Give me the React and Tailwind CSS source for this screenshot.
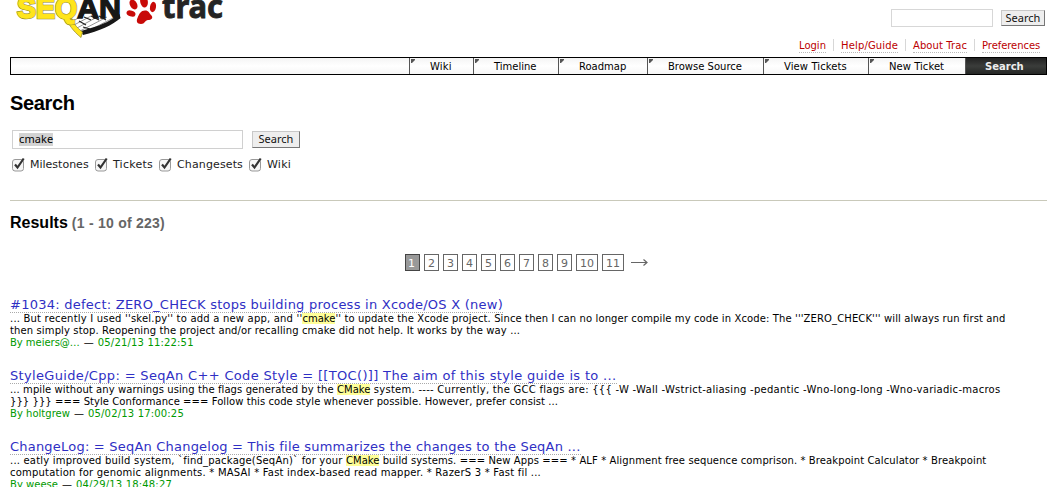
import React from 'react';

const meta = [
  { t: 'Login', c: 'w-[27px]' },
  { t: 'Help/Guide', c: 'w-[57px] tracking-[0.15px]' },
  { t: 'About Trac', c: 'w-[54px] tracking-[0.09px]' },
  { t: 'Preferences', c: 'w-[58px] tracking-[-0.06px]' },
];

const tabs = [
  { t: 'Wiki', c: 'w-[64px] pl-5 tracking-[0.2px]' },
  { t: 'Timeline', c: 'w-[85px] pl-5' },
  { t: 'Roadmap', c: 'w-[89px] pl-5' },
  { t: 'Browse Source', c: 'w-[116px] pl-5' },
  { t: 'View Tickets', c: 'w-[105px] pl-5 tracking-[0.1px]' },
  { t: 'New Ticket', c: 'w-[97px] pl-5 tracking-[0.05px]' },
];

const filters = [
  { t: 'Milestones', c: 'w-[83px]' },
  { t: 'Tickets', c: 'w-[64px] tracking-[0.24px]' },
  { t: 'Changesets', c: 'w-[90px] tracking-[0.13px]' },
  { t: 'Wiki', c: 'w-[60px] tracking-[0.22px]' },
];

const pages = ['2', '3', '4', '5', '6', '7', '8', '9', '10', '11'];

function Logo() {
  return (
    <svg className="block h-[42px] w-[230px]" viewBox="0 0 230 42">
      <path d="M74 18H110L118 17 100 26 84 33Z" fill="#fff" />
      <g fill="none" stroke="#8a8a8a" strokeWidth="0.9">
        <path d="M73 21 82 16M74 25 91 16M77 28 99 16M80 31 107 17M90 30 113 18" />
      </g>
      <g fill="none" stroke="#222" strokeWidth="1.2">
        <path d="M84 17 91 20M91 16 99 20M99 16 106 20M79 21 86 25M83 27 90 29" />
      </g>
      <path d="M81 31 91 28C102 25 112 20 119.500 14L120.500 18C113 25 99 31 83 35Z" fill="#171717" />
      <path d="M65 16C68 24 73 31 81 37.5L82.500 32C76 27 73 23 71 16Z" fill="#ffe51c" stroke="#8d8428" strokeWidth="0.7" />
      <g fontFamily="Liberation Sans, Arial, sans-serif" fontWeight="700" fontSize="30">
        <text x="17" y="18" fill="#ffe51c" stroke="#8d8428" strokeWidth="2.4" textLength="60" lengthAdjust="spacingAndGlyphs">SEQ</text>
        <text x="17" y="18" fill="#ffe51c" stroke="#ffe51c" strokeWidth="1.3" textLength="60" lengthAdjust="spacingAndGlyphs" aria-hidden="true">SEQ</text>
        <text x="77" y="18" fill="#171717" stroke="#171717" strokeWidth="1.4" textLength="44" lengthAdjust="spacingAndGlyphs">AN</text>
      </g>
      <g fill="#c80a08">
        <path d="M145 10.500C149 10.500 149 13 151 15C154 18 151 20 148 20C145 20 145 24 141 24C137 24 136 21 137.500 18C139 14 141 10.500 145 10.500Z" />
        <ellipse cx="131" cy="13.500" rx="4.600" ry="3" transform="rotate(18 131 13.500)" />
        <ellipse cx="133.500" cy="4.500" rx="3.500" ry="5.300" transform="rotate(-30 133.500 4.500)" />
        <ellipse cx="144" cy="1.500" rx="3.800" ry="6" transform="rotate(-10 144 1.500)" />
        <ellipse cx="153" cy="7" rx="3" ry="5.200" transform="rotate(10 153 7)" />
      </g>
      <text x="162" y="18" fontFamily="Noto Sans, sans-serif" fontWeight="700" fontSize="33" fill="#242424" stroke="#242424" strokeWidth="0.9" textLength="61" lengthAdjust="spacingAndGlyphs">trac</text>
    </svg>
  );
}

function Button({ className, children }) {
  return (
    <button className={`flex items-center justify-center border border-t-[#c8c8c8] border-l-[#c8c8c8] border-r-[#777] border-b-[#777] bg-[#eee] pb-[2px] font-['Noto_Sans',sans-serif] text-[11px] leading-none text-[#111] ${className}`}>
      {children}
    </button>
  );
}

function Check() {
  return (
    <svg className="h-[15px] w-[14px] shrink-0" viewBox="0 0 14 15">
      <rect x="0.500" y="2.500" width="11" height="11.500" rx="2.500" fill="#f6f6f6" stroke="#999" />
      <path d="M3 7.500 5.500 10.500 11.700 1.500" fill="none" stroke="#333" strokeWidth="2.200" />
    </svg>
  );
}

function Hit({ children }) {
  return <span className="bg-[#ffff99] tracking-normal">{children}</span>;
}

function Result({ title, titleClass, one, two, by, byClass, date }) {
  return (
    <article className="h-[71px] whitespace-nowrap text-[10px] leading-3">
      <h3 className="flex h-[15px]">
        <a className={`h-[15px] border-b border-dotted border-[#aaa] text-[13px] leading-[13px] text-[#2f2fc4] ${titleClass}`}>{title}</a>
      </h3>
      <div className="h-3">{one}</div>
      <div className="h-3">{two}</div>
      <div className="flex h-3 text-[#090]">
        <span className={byClass}>{by}</span>
        <span className="w-[18px] text-center text-black">—</span>
        <span className="tracking-[0.17px]">{date}</span>
      </div>
    </article>
  );
}

export default function App() {
  return (
    <div className="h-[487px] w-[1057px] overflow-hidden bg-white font-['DejaVu_Sans',Verdana,sans-serif] text-[10px] text-black">
      <header className="flex h-[57px] justify-between">
        <Logo />
        <div className="pt-[9px] pr-3">
          <div className="flex h-[18px] items-center justify-end gap-2">
            <div className="h-[18px] w-[102px] border border-[#d7d7d7]" />
            <Button className="h-4 w-11">Search</Button>
          </div>
          <nav className="mt-3 mr-[5px] flex items-center justify-end">
            {meta.map((m, i) => (
              <div key={m.t} className={`flex h-3 items-center ${i ? 'ml-[7px] border-l border-[#d7d7d7] pl-[7px]' : ''}`}>
                <a className={`mt-[2px] h-[13px] whitespace-nowrap border-b border-dotted border-[#bbb] leading-3 text-[#b00] ${m.c}`}>{m.t}</a>
              </div>
            ))}
          </nav>
        </div>
      </header>

      <nav className="ml-[10px] flex h-[18px] w-[1037px] justify-end border border-black bg-linear-to-b from-[#f4f4f4] via-white to-[#f6f6f6]">
        {tabs.map((t) => (
          <a key={t.t} className={`flex h-4 whitespace-nowrap border-l border-[#555] leading-[18px] ${t.c}`}>
            <svg className="-ml-5 mr-4 h-[5px] w-1 shrink-0 translate-x-px translate-y-px" viewBox="0 0 4 5">
              <path d="M0 0H4V1L1 4H0Z" fill="#555" />
            </svg>
            {t.t}
          </a>
        ))}
        <a className="h-4 w-[81px] border-l border-[#555] bg-linear-to-b from-[#222] via-[#3b3d3b] to-[#252725] pl-[19px] font-bold leading-[18px] text-[#eee]">Search</a>
      </nav>

      <main className="px-[10px]">
        <h1 className="mt-4 h-[25px] font-['Liberation_Sans',Arial,sans-serif] text-[20px] font-bold leading-[24px] tracking-[-0.36px]">Search</h1>
        <form className="mt-[14px] pl-[2px]">
          <div className="flex h-[19px] items-center gap-[9px]">
            <div className="flex h-[19px] w-[231px] items-center border border-[#d0d0d0] pl-[6px] font-['Noto_Sans',sans-serif] text-[11px]">
              <span className="h-[13px] bg-[#d3d3d3] leading-[12px] tracking-[0.1px]">cmake</span>
            </div>
            <Button className="h-[17px] w-12">Search</Button>
          </div>
          <div className="mt-2 flex h-[15px] items-center text-[11px] text-[#222]">
            {filters.map((f) => (
              <label key={f.t} className={`flex items-center gap-1 ${f.c}`}>
                <Check />
                <span className="leading-[14px]">{f.t}</span>
              </label>
            ))}
          </div>
        </form>
        <hr className="mt-[28px] border-t border-[#c9c9ba]" />
        <h2 className="mt-[13px] flex h-[18px] items-baseline gap-1 font-['Liberation_Sans',Arial,sans-serif] text-[16px] font-bold leading-[18px]">
          Results <span className="text-[14px] tracking-[0.25px] text-[#666]">(1 - 10 of 223)</span>
        </h2>

        <div className="mt-[22px] flex h-[17px] items-center gap-1 pl-[395px] text-[11px] leading-[17px] text-[#666]">
          <span className="h-[17px] w-[15px] border border-[#444] bg-[#999] pl-[2px] text-white">1</span>
          {pages.map((p) => (
            <a key={p} className={`h-[17px] border border-[#666] pl-[3px] ${p.length > 1 ? 'w-[22px]' : 'w-[15px]'}`}>{p}</a>
          ))}
          <svg className="ml-[3px] h-[9px] w-[18px]" viewBox="0 0 18 9">
            <path d="M0 4.500H16M12.500 1.500 16 4.500 12.500 7.500" fill="none" stroke="#666" strokeWidth="1.200" />
          </svg>
        </div>

        <section className="mt-[27px]">
          <Result
            title="#1034: defect: ZERO_CHECK stops building process in Xcode/OS X (new)"
            titleClass="tracking-[0.245px]"
            one={<>
              <span className="tracking-[0.2px]">... But recently I used ''skel.py'' to add a new app, and ''</span><Hit>cmake</Hit>
              <span className="tracking-[0.113px]">'' to update the Xcode project. Since then I can no longer compile my code in Xcode: The '''ZERO_CHECK''' will always run first and</span>
            </>}
            two={<span className="tracking-[0.121px]">then simply stop. Reopening the project and/or recalling cmake did not help. It works by the way ...</span>}
            by="By meiers@…"
            byClass="tracking-[-0.03px]"
            date="05/21/13 11:22:51"
          />
          <Result
            title="StyleGuide/Cpp: = SeqAn C++ Code Style = [[TOC()]] The aim of this style guide is to ..."
            titleClass="tracking-[0.333px]"
            one={<>
              <span className="tracking-[0.09px]">... mpile without any warnings using the flags generated by the </span><Hit>CMake</Hit>
              <span className="tracking-[0.263px]"> system. ---- Currently, the GCC flags are: {'{{{'} -W -Wall -Wstrict-aliasing -pedantic -Wno-long-long -Wno-variadic-macros</span>
            </>}
            two={<span className="tracking-[0.064px]">{'}}} }}}'} === Style Conformance === Follow this code style whenever possible. However, prefer consist ...</span>}
            by="By holtgrew"
            byClass="tracking-[0.03px]"
            date="05/02/13 17:00:25"
          />
          <Result
            title="ChangeLog: = SeqAn Changelog = This file summarizes the changes to the SeqAn ..."
            titleClass="tracking-[0.21px]"
            one={<>
              <span className="tracking-[0.198px]">... eatly improved build system, `find_package(SeqAn)` for your </span><Hit>CMake</Hit>
              <span className="tracking-[0.104px]"> build systems. === New Apps === * ALF * Alignment free sequence comprison. * Breakpoint Calculator * Breakpoint</span>
            </>}
            two={<span className="tracking-[0.214px]">computation for genomic alignments. * MASAI * Fast index-based read mapper. * RazerS 3 * Fast fil ...</span>}
            by="By weese"
            byClass="tracking-[0.03px]"
            date="04/29/13 18:48:27"
          />
        </section>
      </main>
    </div>
  );
}
